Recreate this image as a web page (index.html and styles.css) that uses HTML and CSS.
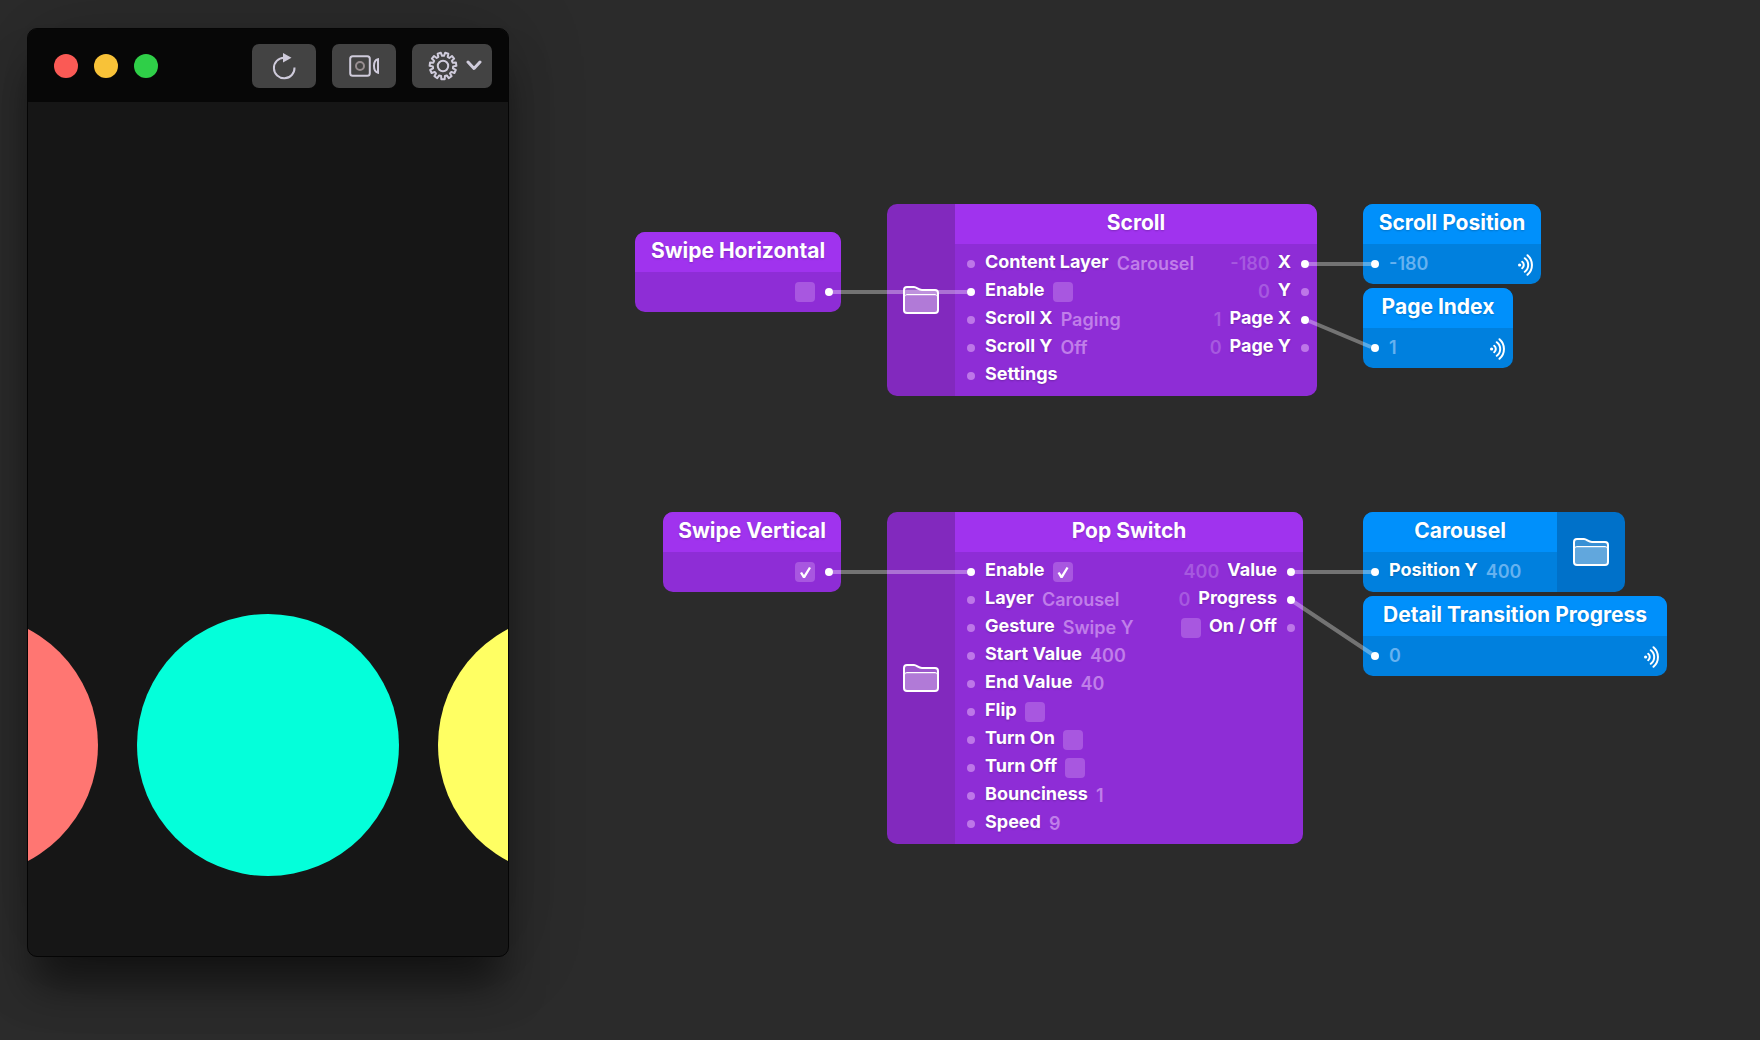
FILE: index.html
```html
<!DOCTYPE html>
<html lang="en">
<head>
<meta charset="utf-8">
<title>Carousel prototype</title>
<link rel="stylesheet" href="styles.css">
</head>
<body>
<svg class="symbols" aria-hidden="true">
  <symbol id="folder" viewBox="0 0 36 28">
    <path d="M1 10V4a3 3 0 0 1 3-3h7c3 0 4 3 8 3h13a3 3 0 0 1 3 3v3z" fill="#fff" fill-opacity=".22"/>
    <path d="M2 11a2 2 0 0 1 2-2h28a2 2 0 0 1 2 2v13a3 3 0 0 1-3 3H5a3 3 0 0 1-3-3z" fill="#fff" fill-opacity=".38"/>
    <path d="M1.500 11q0-2.500 2.500-2.500h28q2.500 0 2.500 2.500" fill="none" stroke="#fff" stroke-width="1"/>
    <path d="M1 4a3 3 0 0 1 3-3h7c3 0 4 3 8 3h13a3 3 0 0 1 3 3v17a3 3 0 0 1-3 3H4a3 3 0 0 1-3-3z" fill="none" stroke="#fff" stroke-width="2"/>
  </symbol>
  <symbol id="broadcast" viewBox="0 0 17 22">
    <circle cx="1.600" cy="11" r="1.600" fill="#fff"/>
    <path d="M4.200 7.800a4 4 0 0 1 0 6.400M6.800 4.200a8.500 8.500 0 0 1 0 13.600M9.500 1.200a13 13 0 0 1 0 19.600" fill="none" stroke="#fff" stroke-width="2" stroke-linecap="round"/>
  </symbol>
</svg>
<main class="desktop">

  <section class="viewer" aria-label="Viewer">
    <header class="titlebar">
      <div class="lights">
        <button class="light close" aria-label="Close"></button>
        <button class="light minimize" aria-label="Minimize"></button>
        <button class="light expand" aria-label="Zoom"></button>
      </div>
      <div class="tools">
        <button class="tool" aria-label="Restart">
          <svg width="24" height="28" viewBox="0 0 24 28"><path d="M22.500 15.500A10.300 10.300 0 1 1 12 5.700" fill="none" stroke="#cfcbdb" stroke-width="2"/><path d="M11 1l8.500 4.800L11 10.600z" fill="#cfcbdb"/></svg>
        </button>
        <button class="tool" aria-label="Record">
          <svg width="32" height="24" viewBox="0 0 32 24" fill="none" stroke="#cfcbdb" stroke-width="2"><rect x="2.200" y="2.200" width="19.600" height="19.600" rx="2.500"/><circle cx="12" cy="12" r="4" stroke="#978d90"/><path d="M30 5.300v13.400c-3-.6-4-3.400-4-6.700s1-6.100 4-6.700z"/></svg>
        </button>
        <button class="tool wide" aria-label="Settings">
          <svg id="gear" width="30" height="30" viewBox="-15 -15 30 30" fill="none" stroke="#cfcbdb" stroke-width="2"></svg>
          <svg width="16" height="12" viewBox="0 0 16 12"><path d="M2 2l6 6.500L14 2" fill="none" stroke="#cfcbdb" stroke-width="3" stroke-linecap="round" stroke-linejoin="round"/></svg>
        </button>
      </div>
    </header>
    <div class="stage">
      <div class="disc coral"></div>
      <div class="disc aqua"></div>
      <div class="disc lemon"></div>
    </div>
  </section>

  <article class="node purple swipe-h">
    <div class="panel">
      <h2>Swipe Horizontal</h2>
      <div class="ports">
        <ul class="outputs"><li><input type="checkbox" aria-label="Swipe Horizontal"><i class="port on"></i></li></ul>
      </div>
    </div>
  </article>

  <article class="node purple scroll">
    <div class="side"><svg class="folder"><use href="#folder"/></svg></div>
    <div class="panel">
      <h2>Scroll</h2>
      <div class="ports">
        <ul class="inputs">
          <li><i class="port"></i><span class="name">Content Layer</span><span class="value">Carousel</span></li>
          <li><i class="port on"></i><label class="name" for="scroll-enable">Enable</label><input type="checkbox" id="scroll-enable"></li>
          <li><i class="port"></i><span class="name">Scroll X</span><span class="value">Paging</span></li>
          <li><i class="port"></i><span class="name">Scroll Y</span><span class="value">Off</span></li>
          <li><i class="port"></i><span class="name">Settings</span></li>
        </ul>
        <ul class="outputs">
          <li><span class="value">-180</span><span class="name">X</span><i class="port on"></i></li>
          <li><span class="value">0</span><span class="name">Y</span><i class="port"></i></li>
          <li><span class="value">1</span><span class="name">Page X</span><i class="port on"></i></li>
          <li><span class="value">0</span><span class="name">Page Y</span><i class="port"></i></li>
        </ul>
      </div>
    </div>
  </article>

  <article class="node blue scroll-position">
    <div class="panel">
      <h2>Scroll Position</h2>
      <div class="ports">
        <ul class="inputs"><li><i class="port on"></i><span class="value">-180</span></li></ul>
        <svg class="broadcast"><use href="#broadcast"/></svg>
      </div>
    </div>
  </article>

  <article class="node blue page-index">
    <div class="panel">
      <h2>Page Index</h2>
      <div class="ports">
        <ul class="inputs"><li><i class="port on"></i><span class="value">1</span></li></ul>
        <svg class="broadcast"><use href="#broadcast"/></svg>
      </div>
    </div>
  </article>

  <article class="node purple swipe-v">
    <div class="panel">
      <h2>Swipe Vertical</h2>
      <div class="ports">
        <ul class="outputs"><li><input type="checkbox" aria-label="Swipe Vertical" checked><i class="port on"></i></li></ul>
      </div>
    </div>
  </article>

  <article class="node purple pop-switch">
    <div class="side"><svg class="folder"><use href="#folder"/></svg></div>
    <div class="panel">
      <h2>Pop Switch</h2>
      <div class="ports">
        <ul class="inputs">
          <li><i class="port on"></i><label class="name" for="pop-enable">Enable</label><input type="checkbox" id="pop-enable" checked></li>
          <li><i class="port"></i><span class="name">Layer</span><span class="value">Carousel</span></li>
          <li><i class="port"></i><span class="name">Gesture</span><span class="value">Swipe Y</span></li>
          <li><i class="port"></i><span class="name">Start Value</span><span class="value">400</span></li>
          <li><i class="port"></i><span class="name">End Value</span><span class="value">40</span></li>
          <li><i class="port"></i><label class="name" for="pop-flip">Flip</label><input type="checkbox" id="pop-flip"></li>
          <li><i class="port"></i><label class="name" for="pop-on">Turn On</label><input type="checkbox" id="pop-on"></li>
          <li><i class="port"></i><label class="name" for="pop-off">Turn Off</label><input type="checkbox" id="pop-off"></li>
          <li><i class="port"></i><span class="name">Bounciness</span><span class="value">1</span></li>
          <li><i class="port"></i><span class="name">Speed</span><span class="value">9</span></li>
        </ul>
        <ul class="outputs">
          <li><span class="value">400</span><span class="name">Value</span><i class="port on"></i></li>
          <li><span class="value">0</span><span class="name">Progress</span><i class="port on"></i></li>
          <li><input type="checkbox" id="pop-state"><label class="name" for="pop-state">On / Off</label><i class="port"></i></li>
        </ul>
      </div>
    </div>
  </article>

  <article class="node blue carousel">
    <div class="panel">
      <h2>Carousel</h2>
      <div class="ports">
        <ul class="inputs"><li><i class="port on"></i><span class="name">Position Y</span><span class="value">400</span></li></ul>
      </div>
    </div>
    <div class="side"><svg class="folder"><use href="#folder"/></svg></div>
  </article>

  <article class="node blue detail">
    <div class="panel">
      <h2>Detail Transition Progress</h2>
      <div class="ports">
        <ul class="inputs"><li><i class="port on"></i><span class="value">0</span></li></ul>
        <svg class="broadcast"><use href="#broadcast"/></svg>
      </div>
    </div>
  </article>

  <svg class="wires" aria-hidden="true">
    <path d="M833 292H967M1309 264H1371M1309 321L1371 347M833 572H967M1295 572H1371M1294 602L1372 654"/>
  </svg>
</main>
<script src="gear.js"></script>
</body>
</html>
```
FILE: gear.js
```js
// Builds the toothed outline of the settings gear.
const TEETH = 11;
const point = (r, a) => `${(r * Math.sin(a)).toFixed(2)} ${(-r * Math.cos(a)).toFixed(2)}`;
const step = 2 * Math.PI / TEETH;
const points = [];
for (let i = 0; i < TEETH; i++) {
  const a = Math.PI + i * step;
  points.push(point(10.2, a - step * 0.33), point(13.4, a - step * 0.22), point(13.4, a + step * 0.22), point(10.2, a + step * 0.33));
}
document.getElementById("gear").innerHTML =
  `<path stroke-linejoin="round" d="M${points.join("L")}Z"/><circle r="5.2"/>`;
```
FILE: styles.css
```css
* { box-sizing: border-box; }

body {
  margin: 0;
  background: #2b2b2b;
  color: #fff;
  font-family: Inter, "Liberation Sans", sans-serif;
}

button, input { margin: 0; padding: 0; border: 0; }
ul { margin: 0; padding: 0; list-style: none; }

.symbols { position: absolute; width: 0; height: 0; }

.desktop {
  position: relative;
  min-height: 100vh;
  overflow: hidden;
}

/* Viewer window */
.viewer {
  position: absolute;
  top: 28px;
  bottom: 83px;
  left: 27px;
  width: 482px;
  display: flex;
  flex-direction: column;
  overflow: hidden;
  border: 1px solid #050505;
  border-radius: 10px;
  background: #161616;
  box-shadow: 0 0 80px rgba(0, 0, 0, .2), 0 36px 40px -8px rgba(0, 0, 0, .5);
}

.titlebar {
  display: flex;
  align-items: center;
  justify-content: space-between;
  height: 73px;
  padding: 0 16px 0 26px;
  background: #070707;
}

.lights, .tools { display: flex; gap: 16px; }

.light { width: 24px; height: 24px; border-radius: 50%; }
.close { background: #fa5a55; }
.minimize { background: #f8c238; }
.expand { background: #2fcf48; }

.tool {
  display: flex;
  align-items: center;
  justify-content: center;
  gap: 8px;
  width: 64px;
  height: 44px;
  border-radius: 7px;
  background: #434343;
}
.wide { width: 80px; padding-left: 6px; }

.stage {
  flex: 1;
  display: flex;
  align-items: flex-end;
  justify-content: center;
  gap: 39px;
  padding-bottom: 80px;
}

.disc {
  flex: none;
  width: 262px;
  height: 262px;
  border-radius: 50%;
}
.coral { background: #ff7672; }
.aqua { background: #04ffda; }
.lemon { background: #ffff63; }

/* Patch nodes */
.node {
  position: absolute;
  display: flex;
  overflow: hidden;
  border-radius: 10px;
}

.purple { --head: #a033ee; --body: #8e2dd6; --side: #8229be; --dim: #c07ee9; --out: #a659df; --port: #bd77e8; --box: #a857e0; }
.blue { --head: #0090fb; --body: #0080de; --side: #0071c9; --dim: #66b2f0; }

.swipe-h { left: 635px; top: 232px; width: 206px; }
.scroll { left: 887px; top: 204px; width: 430px; }
.scroll-position { left: 1363px; top: 204px; width: 178px; }
.page-index { left: 1363px; top: 288px; width: 150px; }
.swipe-v { left: 663px; top: 512px; width: 178px; }
.pop-switch { left: 887px; top: 512px; width: 416px; }
.carousel { left: 1363px; top: 512px; width: 262px; }
.detail { left: 1363px; top: 596px; width: 304px; }

.side {
  flex: none;
  display: flex;
  align-items: center;
  justify-content: center;
  width: 68px;
  background: var(--side);
}

.folder { position: relative; z-index: 2; width: 36px; height: 28px; }

.panel { flex: 1; background: var(--body); }

h2 {
  margin: 0;
  padding-bottom: 2px;
  background: var(--head);
  font-size: 21px;
  font-weight: 700;
  line-height: 38px;
  text-align: center;
  text-shadow: 0 1px 2px rgba(0, 0, 0, .2);
  white-space: nowrap;
}

.ports {
  display: flex;
  justify-content: space-between;
  padding: 6px 8px;
}
.purple .inputs { padding-left: 4px; }
.outputs { margin-left: auto; }

li {
  display: flex;
  align-items: center;
  gap: 8px;
  height: 28px;
  font-size: 18px;
  line-height: 24px;
  white-space: nowrap;
}
.outputs li { justify-content: flex-end; }

.port {
  position: relative;
  z-index: 2;
  width: 8px;
  height: 8px;
  border-radius: 50%;
  background: var(--port);
}
.on { background: #fff; }
.inputs .port { margin-right: 2px; }
.outputs .port { margin-left: 2px; }

.name {
  padding-bottom: 4px;
  font-weight: 700;
  text-shadow: 0 1px 2px rgba(0, 0, 0, .2);
}
.value { color: var(--dim); font-weight: 600; }
.outputs .value { color: var(--out); }

input[type="checkbox"] {
  appearance: none;
  width: 20px;
  height: 20px;
  border-radius: 4px;
  background: var(--box);
}
input:checked::before {
  content: "";
  display: block;
  height: 20px;
  background: #fff;
  clip-path: polygon(5px 11px, 7px 10px, 9px 13px, 14px 5px, 16px 6px, 10px 16px, 8px 16px);
}

.broadcast { width: 17px; height: 22px; margin: 4px -2px 0 0; }

.wires {
  position: absolute;
  inset: 0;
  z-index: 1;
  width: 100%;
  height: 100%;
  pointer-events: none;
}
.wires path {
  fill: none;
  stroke: #fff;
  stroke-opacity: .34;
  stroke-width: 4;
}
```
